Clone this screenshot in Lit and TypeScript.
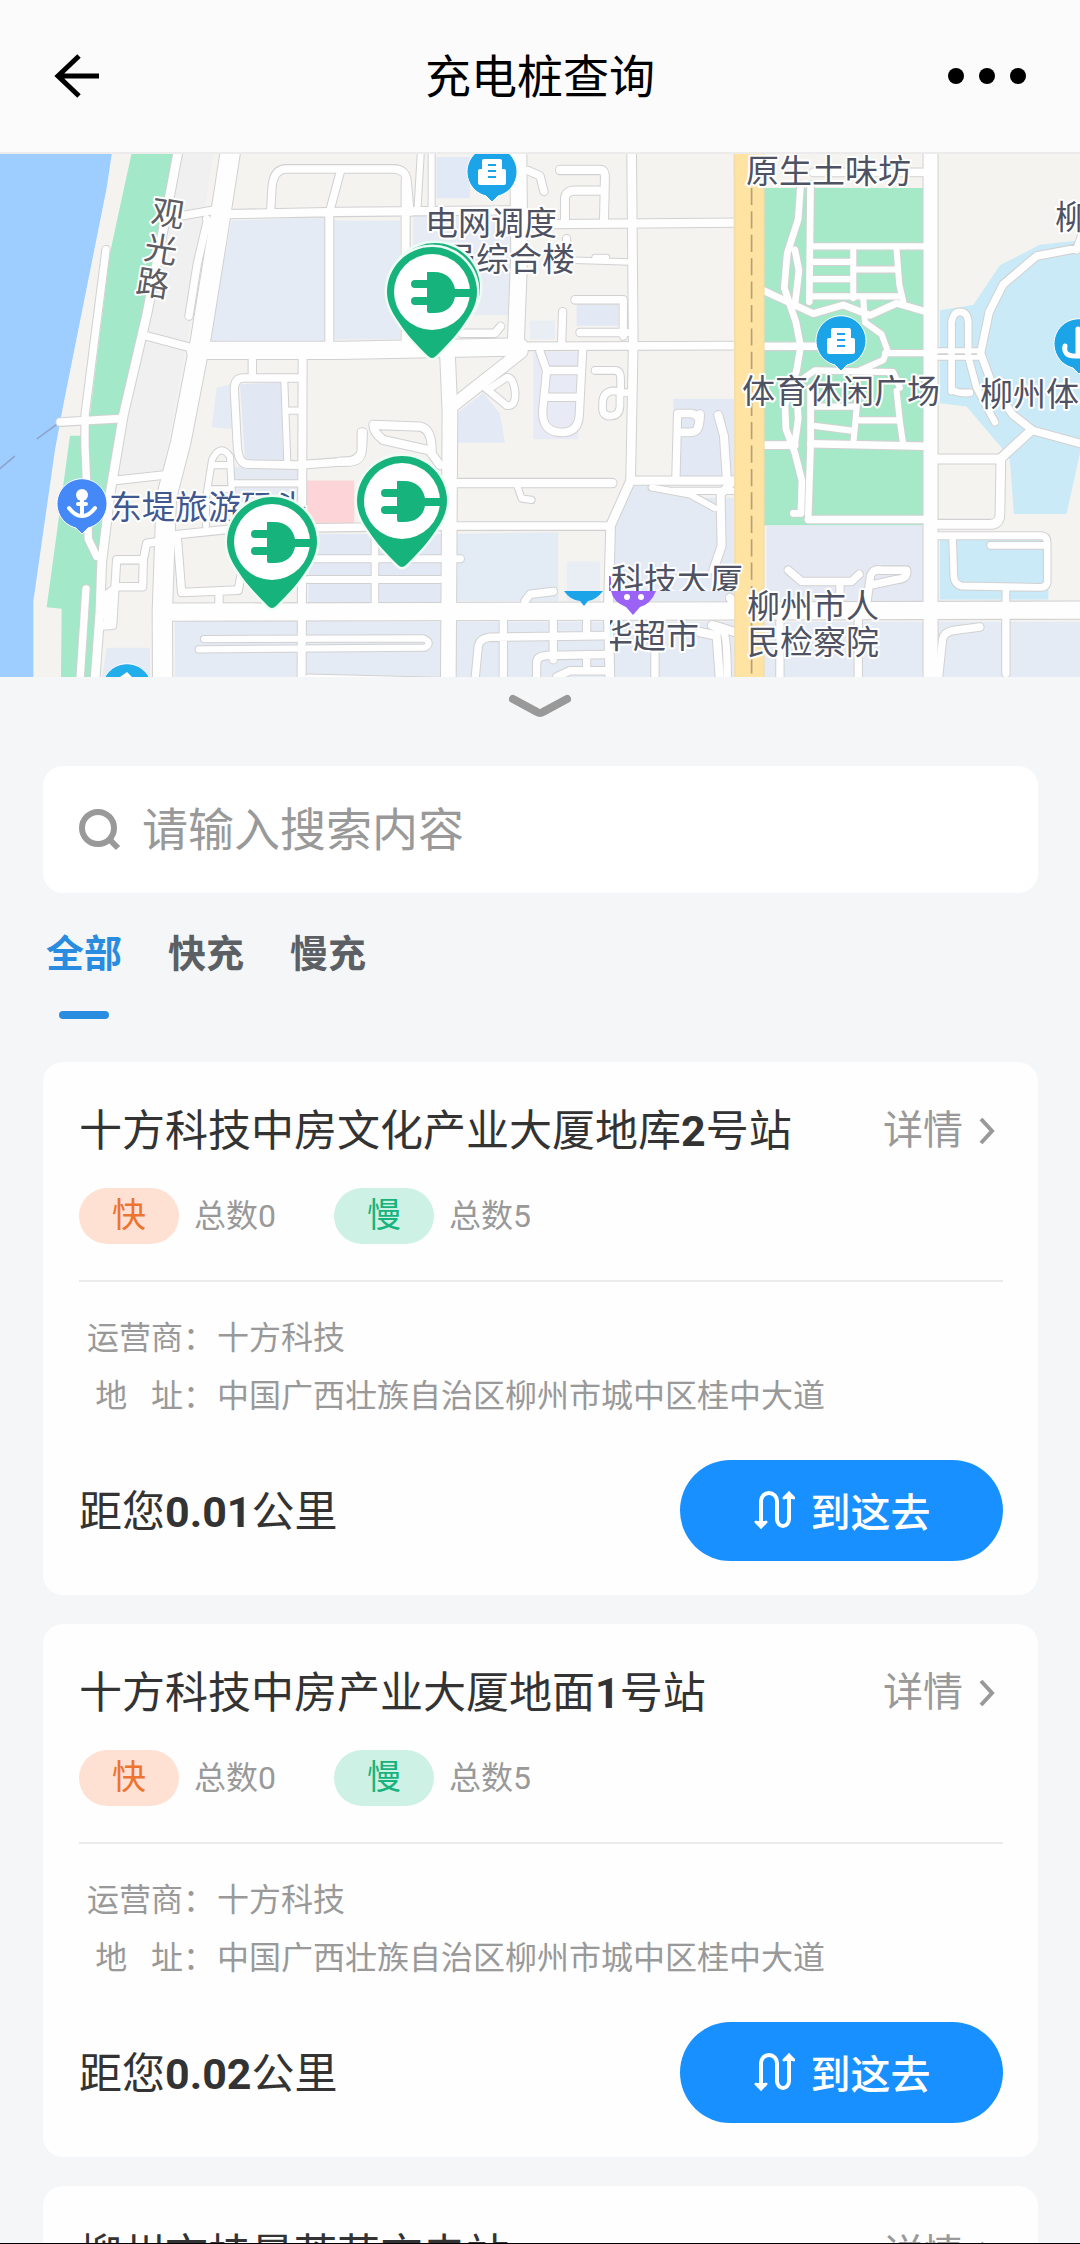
import { LitElement, html, svg, css } from "lit";
import { customElement, property, state } from "lit/decorators.js";
import { classMap } from "lit/directives/class-map.js";

interface Station {
  name: string;
  fast: number;
  slow: number;
  operator: string;
  address: string;
  distance: string;
}

const STATIONS: Station[] = [
  {
    name: "十方科技中房文化产业大厦地库2号站",
    fast: 0,
    slow: 5,
    operator: "十方科技",
    address: "中国广西壮族自治区柳州市城中区桂中大道",
    distance: "0.01",
  },
  {
    name: "十方科技中房产业大厦地面1号站",
    fast: 0,
    slow: 5,
    operator: "十方科技",
    address: "中国广西壮族自治区柳州市城中区桂中大道",
    distance: "0.02",
  },
  {
    name: "柳州市桂景荟苑充电站",
    fast: 0,
    slow: 5,
    operator: "十方科技",
    address: "中国广西壮族自治区柳州市城中区桂中大道",
    distance: "0.03",
  },
];

/** Wraps runs of digits so that they can be set in bold. */
const boldDigits = (text: string) =>
  text
    .split(/([\d.]+)/)
    .map((part) => (/^[\d.]+$/.test(part) ? html`<b class="num">${part}</b>` : part));

// Map areas: [fill, path], in survey units (three to a map pixel).
const AREAS: [string, string][] = [
  ["#9ecdff", "M0 0H337L320 110L190 740L165 870L100 1310V1540H0Z"],
  ["#a3e8c8", "M397 0H522L500 150L370 770L330 960L300 1180L290 1340L270 1540H183L185 1332L140 1328L210 830H262L330 300L352 200Z"],
  ["#f1f0f0", "M530 12H640L600 250L560 570L440 540ZM435 555L555 585L490 930L350 945Z"],
  ["#e5ebf4", "M695 205L975 195L978 555H625Z"],
  ["#e5ebf4", "M1000 205H1200V550H1000Z"],
  ["#e1e8f4", "M720 680L842 675L850 900H735Z"],
  ["#e5ebf4", "M650 690L690 680L700 810L635 805Z"],
  ["#e5eaf2", "M700 920H895V1050H700Z"],
  ["#fdd5d8", "M918 960H1063V1085H918Z"],
  ["#e5ebf4", "M525 1370H3240V1540H525Z"],
  ["#e5ebf4", "M320 1445H450V1540H305Z"],
  ["#e3e9f4", "M925 1115H1325V1320H925Z"],
  ["#e3ebf4", "M1365 1115L1675 1110V1310H1365Z"],
  ["#e9edf4", "M1700 1195H1800V1310H1700Z"],
  ["#e3eaf4", "M1840 1090L1895 975L1965 975L2060 1010L2205 1010V1310H1840Z"],
  ["#e3e9f4", "M2020 722H2205V950H2020Z"],
  ["#e0e9f5", "M1310 20H1410V140H1310Z"],
  ["#e6ebf4", "M1240 190H1540V480H1240Z"],
  ["#e3e9f4", "M1730 450H1855V510H1730Z"],
  ["#e9edf4", "M1590 495H1665V550H1590Z"],
  ["#e8ebf5", "M1600 585H1735V840H1600Z"],
  ["#e4eaf5", "M1370 765L1450 705L1500 765L1515 850H1370Z"],
  ["#a5e9c9", "M2290 110H2770V1090H2290Z"],
  ["#e5e9f3", "M2300 1090H2770V1310H2300Z"],
  ["#c9eaf6", "M2820 465L2920 450L3000 335L3120 275L3240 262V880L3200 1057H3042L3030 900L3010 870L2900 745L2820 735Z"],
  ["#c9eaf6", "M2820 1130H3150L3145 1305H2820Z"],
];

// Streets: [x offset of the sheet, width, path].
const STREETS: [number, number, string][] = [
  [0, 22, "M318 290L255 770L255 860L262 1020L265 1130L290 1180M180 790L360 780M258 1275L240 1540"],
  [0, 26, "M535 0L500 180L440 480L370 770L330 1000L305 1200L300 1340L285 1540"],
  [0, 22, "M440 540L565 572M340 960L500 943M550 190L640 175M620 200L630 235M622 205L592 330L567 482"],
  [0, 22, "M310 1382L338 1380L350 1190L430 1190L428 1268L352 1268M430 1190L440 1142L480 1137M322 1380V1290L350 1268"],
  [0, 22, "M812 180L816 110Q820 55 860 55H1180Q1220 55 1222 95L1230 180M990 175L1022 60"],
  [0, 24, "M680 186L1020 180L1560 175M988 185V570M1217 90V570"],
  [0, 22, "M757 610V660M895 662H730Q703 662 703 695L712 860Q715 912 745 912L890 915L1030 905Q1085 905 1088 860L1090 820"],
  [0, 18, "M853 670L862 905M870 757H900M700 968H905M618 1090V1010L636 900Q660 850 690 890L695 985M640 915H690M636 985H690"],
  [0, 22, "M520 1118L700 1100L1370 1092L1820 1092M532 1125L545 1285L715 1278L722 1240M657 1280V1320"],
  [0, 20, "M925 1187H1382M925 1247H1320M1125 1100V1330"],
  [0, 18, "M612 1420L1270 1418Q1300 1430 1275 1445L596 1450M925 1532L1340 1542"],
  [0, 24, "M908 610L905 1540"],
  [0, 58, "M692 0L652 250L602 550L542 850L499 1010L487 1340L488 1540"],
  [1020, 18, "M243 0L233 165M275 0V165"],
  [1020, 24, "M660 58H780Q795 58 795 80L792 210M675 215V140Q678 120 700 118H790M640 215L1195 211"],
  [1020, 22, "M565 60L600 75L612 120M680 258V270M705 435H850V540M720 530H860M668 470L665 565M365 532L465 532L482 512"],
  [1020, 16, "M705 320L870 325M765 312H800"],
  [1020, 22, "M600 585L620 640L608 760Q608 820 665 820Q715 820 718 770L728 580M620 640H720M620 718H720"],
  [1020, 20, "M765 640H825Q842 640 842 665V700H815Q788 705 788 735V755Q792 775 815 772Q838 770 840 745V705H875"],
  [1020, 20, "M435 690L500 742Q530 745 525 700Q520 660 500 660L450 692"],
  [1020, 24, "M300 915L268 872L130 842Q100 820 100 798L240 803Q278 810 275 880M65 820V870Q65 905 20 905H0"],
  [1020, 24, "M345 967H818M870 960H1205"],
  [1020, 18, "M530 970L545 1012L575 1016M935 980L1050 1000L1125 1040M1000 990H1190"],
  [1020, 22, "M1008 950L1013 765H1055Q1080 770 1078 795Q1075 820 1050 820H1018M555 1310L570 1290L640 1282"],
  [1020, 22, "M490 1350V1540M640 1350V1480M405 1540L415 1440Q420 1418 450 1415L790 1410M740 1350V1410M590 1540V1490Q590 1470 620 1468L800 1465M740 1465V1505M650 1530L690 1512H800"],
  [1020, 22, "M945 1350V1540M1115 1380L1150 1398Q1162 1410 1162 1540"],
  [1020, 26, "M875 0L880 560L872 960L812 1090L805 1340L810 1540"],
  [1020, 22, "M520 570L1190 568"],
  [1020, 36, "M335 745L420 680L545 585"],
  [1020, 48, "M535 0L538 300L527 575"],
  [1020, 44, "M322 580L330 760L325 1540"],
  [0, 50, "M585 582L1020 582L1560 572"],
  [2100, 20, "M302 100L295 200L262 300L253 400L288 500L302 570L290 640L255 740L258 810L285 880L306 960L303 1055H280M285 290L297 350L285 450M290 700L295 780L285 850"],
  [2100, 20, "M332 100L328 440M332 690L332 860L325 1060M190 408L280 448L340 475L430 450L510 480L590 445L680 470"],
  [2100, 18, "M335 280H680M335 325H460M335 375H450M335 425H600M460 285V430M590 290L598 390L610 440M470 347H590"],
  [2100, 18, "M490 430L495 500L545 535L562 580L550 610L480 640M555 590H680M335 745H460M335 800L455 815M475 700L460 855M480 785H590M590 700L600 790L610 855M300 670L345 640L580 645L600 690"],
  [2100, 22, "M190 857H285M332 853L680 860M190 570H380M325 1073H690"],
  [2100, 20, "M755 700V500Q760 470 780 470Q803 470 805 500V590M755 600V690Q760 708 810 705M805 600L830 690L885 790"],
  [2100, 14, "M715 583H840M715 602H840"],
  [2100, 22, "M1145 283L1010 308L910 390L868 470L842 590L880 690L940 770L1000 815L1140 852M1130 290L1145 250"],
  [2100, 26, "M990 818L903 895L900 1060Q898 1087 870 1087H715M903 897H715"],
  [2100, 20, "M715 1120H1025Q1042 1122 1042 1140V1255Q1040 1270 1020 1270L785 1266Q765 1262 762 1240L758 1130M1040 1148H872M918 1270V1330"],
  [2100, 22, "M918 1340V1520M715 1540L728 1420Q732 1400 760 1395L840 1385M475 1350V1540M240 1370V1540"],
  [2100, 22, "M265 1220L305 1253H455L478 1232M420 1255V1320M500 1320L512 1235Q520 1215 545 1220H620Q625 1245 590 1247L520 1262"],
  [2100, 24, "M55 770L72 830L80 945M100 960L62 1000L65 1150L40 1220M108 1330L90 1300M0 1400L50 1410L60 1540M40 1380L105 1400M0 768Q0 790 -5 800"],
  [2100, 22, "M340 65H680"],
  [2100, 42, "M692 0V1540"],
  [0, 50, "M500 1342L3240 1336"],
];

// Point-of-interest names: [x, baseline, text].
const PLACES: [number, number, string][] = [
  [425, 81, "电网调度"],
  [443, 117, "局综合楼"],
  [746, 29, "原生土味坊"],
  [742, 249, "体育休闲广场"],
  [980, 252, "柳州体"],
  [1055, 75, "柳州"],
  [747, 464, "柳州市人"],
  [747, 500, "民检察院"],
];

const CHARGERS: [number, number][] = [
  [435, 134],
  [432, 138],
  [402, 347],
  [272, 388],
];

@customElement("station-map")
class StationMap extends LitElement {
  static styles = css`
    :host {
      display: block;
      background: #f4f3f0;
    }
    .map {
      display: block;
      width: 100%;
      height: auto;
    }
    .line {
      fill: none;
      stroke-linecap: round;
      stroke-linejoin: round;
    }
    .casing {
      stroke: #d2d1d2;
    }
    .paving {
      stroke: #fefefe;
    }
    .place {
      font: 400 33px "Noto Sans CJK SC", sans-serif;
      fill: #4e5262;
      stroke: #fff;
      stroke-width: 4px;
      stroke-linejoin: round;
      paint-order: stroke;
    }
    .pier {
      fill: #40588f;
    }
    .street {
      fill: #5c5c62;
      text-anchor: middle;
    }
  `;

  private street([dx, width, d]: [number, number, string], kind: string) {
    const extra = kind === "casing" ? 6 : 0;
    return svg`<path class="line ${kind}" d=${d} stroke-width=${width + extra} transform="translate(${dx} 0)" />`;
  }

  private poi(x: number, y: number, fill: string, glyph: unknown) {
    return svg`<g transform="translate(${x} ${y})">
      <path d="M0 30L-6 24A25 25 0 1 1 6 24Z" fill=${fill} stroke="#fff" stroke-width="1" />
      ${glyph}
    </g>`;
  }

  private building() {
    return svg`<path d="M-8-13H8Q10-13 10-11V-3H12Q14-3 14-1V11Q14 13 12 13H-12Q-14 13-14 11V-1Q-14-3-12-3H-10V-11Q-10-13-8-13Z" fill="#fff" />
      <path d="M-4-7H4M-4-1H4M-4 5H4" stroke="#1ba5e8" stroke-width="2" />`;
  }

  private charger([x, y]: [number, number]) {
    return svg`<g transform="translate(${x} ${y})">
      <path d="M-4 64C-14 54-26 42-34 29C-41 19-45 10-45 0A45 45 0 0 1 45 0C45 10 41 19 34 29C26 42 14 54 4 64Q0 68-4 64Z"
        fill="#17b37c" stroke="#eefcf6" stroke-width="5" paint-order="stroke" />
      <circle r="38" fill="#fff" />
      <path d="M-5-20H2C14-20 21-13 23-3H40V5H23C21 15 14 21 2 21H-3Q-5 21-5 19V13H-17A4 4 0 0 1-17 5H-5V-4H-17A4 4 0 0 1-17-12H-5Z" fill="#17b37c" />
    </g>`;
  }

  render() {
    return html`
      <svg class="map" viewBox="0 0 1080 523" role="img" aria-label="充电桩地图">
        <defs>
          <clipPath id="tower"><rect x="608" y="400" width="140" height="37" /></clipPath>
          <clipPath id="market"><rect x="610" y="437" width="120" height="86" /></clipPath>
        </defs>
        <rect width="1080" height="523" fill="#f4f3f0" />
        <g transform="translate(0 -4) scale(.3333 .3444)">
          ${AREAS.map(([fill, d]) => svg`<path d=${d} fill=${fill} />`)}
          <path class="line" d="M0 925L43 890M112 838L180 790" stroke="#8fa6cc" stroke-width="5" />
          ${STREETS.map((s) => this.street(s, "casing"))}
          ${STREETS.map((s) => this.street(s, "paving"))}
          <path d="M2200 0H2292V1540H2205Z" fill="#ffe3a2" />
          <path d="M2205 0V1540M2292 0V1540" stroke="#f0dcae" stroke-width="4" />
          <path d="M2255 110V1540" stroke="#b3a07c" stroke-width="5" stroke-dasharray="50 18" />
        </g>
        ${this.poi(492, 18, "#1ba5e8", this.building())}
        ${this.poi(841, 187, "#1ba5e8", this.building())}
        ${this.poi(
          1079,
          190,
          "#1ba5e8",
          svg`<path class="line" d="M-1-15V8M-14 2Q-16 12-4 12H10" stroke="#fff" stroke-width="5" />`,
        )}
        ${this.poi(
          82,
          350,
          "#4489f7",
          svg`<circle cy="-9" r="6" fill="#fff" />
            <path class="line" d="M0-6V11M-4 0H4M-13 4Q-7 12 0 12Q7 12 13 4" stroke="#fff" stroke-width="4" />`,
        )}
        ${this.poi(127, 535, "#22aeea", svg`<path d="M-7-12L0-17L5-12Z" fill="#fff" />`)}
        <path d="M564 437H603Q596 446 588 447L584 452L580 447Q570 446 564 437Z" fill="#1ba5e8" />
        <path d="M611 437H656Q651 450 640 453L633 461L626 453Q613 448 611 437Z" fill="#9a63f5" />
        <path d="M609 422H611V437H609Z" fill="#9a63f5" />
        <circle cx="627" cy="443" r="3" fill="#fff" />
        <circle cx="641" cy="443" r="3" fill="#fff" />
        ${PLACES.map(([x, y, name]) => svg`<text class="place" x=${x} y=${y}>${name}</text>`)}
        <g clip-path="url(#tower)"><text class="place" x="611" y="438">科技大厦</text></g>
        <g clip-path="url(#market)"><text class="place" x="600" y="494">华超市</text></g>
        <text class="place pier" x="109" y="365">东堤旅游码头</text>
        <text class="place street" transform="translate(166 71) rotate(9)">观</text>
        <text class="place street" transform="translate(159 107) rotate(9)">光</text>
        <text class="place street" transform="translate(151 141) rotate(9)">路</text>
        ${CHARGERS.map((c) => this.charger(c))}
      </svg>
    `;
  }
}

@customElement("station-card")
class StationCard extends LitElement {
  @property({ attribute: false }) station!: Station;

  static styles = css`
    :host {
      display: block;
      flex: none;
      padding: 39px 35px 34px 36px;
      border-radius: 20px;
      background: #fefefe;
      color: #333;
    }
    .head,
    .foot {
      display: flex;
      align-items: center;
      justify-content: space-between;
    }
    .name {
      margin: 0;
      font-size: 43px;
      font-weight: 400;
      line-height: 60px;
      white-space: nowrap;
    }
    .num {
      font-family: Roboto, sans-serif;
      font-weight: 700;
    }
    .more {
      display: flex;
      align-items: center;
      gap: 16px;
      padding-right: 8px;
      color: #999;
      font-size: 40px;
      line-height: 60px;
      text-decoration: none;
    }
    .counts {
      display: flex;
      gap: 58px;
      margin-top: 27px;
      padding-bottom: 36px;
      border-bottom: 2px solid #ebebeb;
    }
    .count {
      display: flex;
      align-items: center;
      gap: 15px;
      color: #999;
      font-size: 32px;
      line-height: 58px;
      height: 56px;
    }
    .badge {
      width: 100px;
      border-radius: 28px;
      font-size: 34px;
      line-height: 54px;
      height: 56px;
      text-align: center;
    }
    .fast {
      background: #ffe1d3;
      color: #ec7430;
    }
    .slow {
      background: #cdf1e4;
      color: #17b37c;
    }
    .info {
      display: grid;
      grid-template-columns: 138px 1fr;
      margin: 27px 0 35px;
      color: #999;
      font-size: 32px;
      line-height: 58px;
    }
    .label {
      padding-right: 2px;
      text-align: right;
    }
    .value {
      margin: 0;
    }
    .away {
      padding-top: 3px;
      font-size: 43px;
      line-height: 60px;
    }
    .go {
      display: flex;
      align-items: center;
      justify-content: center;
      gap: 16px;
      width: 323px;
      height: 101px;
      padding: 0 0 2px;
      border: 0;
      border-radius: 51px;
      background: #1890ff;
      color: #fff;
      font: inherit;
      font-size: 40px;
      font-weight: 500;
    }
  `;

  render() {
    const s = this.station;
    return html`
      <div class="head">
        <h2 class="name">${boldDigits(s.name)}</h2>
        <a class="more" href="#detail"
          >详情
          <svg width="16" height="28" viewBox="0 0 16 28" fill="none" stroke="#999" stroke-width="4" aria-hidden="true">
            <path d="M2 2L13 14L2 26" />
          </svg>
        </a>
      </div>
      <div class="counts">
        <div class="count"><span class="badge fast">快</span><span>总数${s.fast}</span></div>
        <div class="count"><span class="badge slow">慢</span><span>总数${s.slow}</span></div>
      </div>
      <dl class="info">
        <dt class="label">运营商：</dt>
        <dd class="value">${s.operator}</dd>
        <dt class="label">地&nbsp;&nbsp;&nbsp;址：</dt>
        <dd class="value">${s.address}</dd>
      </dl>
      <div class="foot">
        <span class="away">距您${boldDigits(s.distance)}公里</span>
        <button class="go" type="button">
          <svg width="42" height="40" viewBox="0 0 42 40" fill="none" stroke="#fff" stroke-width="4" aria-hidden="true">
            <path d="M8 33V11A8 8 0 0 1 24 11V29A6 7 0 0 0 36 29V7" />
            <path d="M2 31H14L8 39ZM30 9H42L36 1Z" fill="#fff" stroke="none" />
            <path d="M3 32L8 37L13 32M31 8L36 3L41 8" stroke-width="3" stroke-linecap="round" />
          </svg>
          到这去
        </button>
      </div>
    `;
  }
}

@customElement("app-root")
class AppRoot extends LitElement {
  @state() private tab = "全部";

  static styles = css`
    :host {
      display: flex;
      flex-direction: column;
      box-sizing: border-box;
      height: 100vh;
      overflow: hidden;
      border-bottom: 1px solid #000;
      background: #f4f6f8;
      font-family: Roboto, "Noto Sans CJK SC", sans-serif;
    }
    .bar {
      display: grid;
      grid-template-columns: 1fr auto 1fr;
      align-items: center;
      flex: none;
      box-sizing: border-box;
      height: 154px;
      padding: 0 54px;
      border-bottom: 2px solid #ececec;
      background: #fbfbfb;
    }
    .title {
      margin: 0;
      padding-top: 2px;
      color: #000;
      font-size: 46px;
      font-weight: 400;
      line-height: 60px;
    }
    .icon {
      display: flex;
      padding: 0;
      border: 0;
      background: none;
    }
    .dots {
      justify-self: end;
    }
    .map {
      flex: none;
    }
    .fold {
      display: flex;
      align-items: center;
      justify-content: center;
      flex: none;
      height: 57px;
      padding: 0;
      border: 0;
      background: none;
    }
    .search {
      display: flex;
      align-items: center;
      gap: 21px;
      flex: none;
      height: 127px;
      margin: 32px 42px 0 43px;
      padding: 0 36px;
      border-radius: 20px;
      background: #fff;
    }
    .field {
      flex: 1;
      min-width: 0;
      height: 80px;
      padding: 0;
      border: 0;
      outline: 0;
      background: none;
      color: #333;
      font: inherit;
      font-size: 46px;
    }
    .field::placeholder {
      color: #999;
      opacity: 1;
    }
    .tabs {
      display: flex;
      gap: 46px;
      flex: none;
      padding: 31px 46px 0;
    }
    .tab {
      display: flex;
      flex-direction: column;
      align-items: center;
      gap: 27px;
      padding: 0;
      border: 0;
      background: none;
      color: #5c5f63;
      font: inherit;
      font-size: 38px;
      font-weight: 700;
      line-height: 60px;
    }
    .tab::after {
      content: "";
      width: 50px;
      height: 8px;
      border-radius: 4px;
    }
    .on {
      color: #2a8ce0;
    }
    .on::after {
      background: #2a8ce0;
    }
    .list {
      display: flex;
      flex-direction: column;
      flex: 1;
      gap: 29px;
      min-height: 0;
      margin-top: 43px;
      padding: 0 42px 0 43px;
      overflow-y: auto;
      scrollbar-width: none;
    }
  `;

  render() {
    return html`
      <header class="bar">
        <button class="icon" type="button" aria-label="返回">
          <svg width="46" height="44" viewBox="0 0 46 44" fill="none" stroke="#000" stroke-width="5">
            <path d="M45 22H4M25 2L4 22L25 42" />
          </svg>
        </button>
        <h1 class="title">充电桩查询</h1>
        <button class="icon dots" type="button" aria-label="更多">
          <svg width="78" height="16" viewBox="0 0 78 16">
            <circle cx="8" cy="8" r="8" />
            <circle cx="39" cy="8" r="8" />
            <circle cx="70" cy="8" r="8" />
          </svg>
        </button>
      </header>
      <station-map class="map"></station-map>
      <button class="fold" type="button" aria-label="收起地图">
        <svg width="62" height="24" viewBox="0 0 62 24" fill="none" stroke="#999" stroke-width="8" stroke-linecap="round">
          <path d="M4 5L28 18Q31 20 34 18L58 5" />
        </svg>
      </button>
      <label class="search">
        <svg width="42" height="42" viewBox="0 0 42 42" fill="none" stroke="#999" stroke-width="6" aria-hidden="true">
          <circle cx="19" cy="19" r="16" />
          <path d="M30 30L39 39" />
        </svg>
        <input class="field" type="text" aria-label="搜索" placeholder="请输入搜索内容" />
      </label>
      <nav class="tabs" role="tablist">
        ${["全部", "快充", "慢充"].map(
          (name) => html`<button
            class=${classMap({ tab: true, on: this.tab === name })}
            type="button"
            role="tab"
            aria-selected=${this.tab === name}
            @click=${() => (this.tab = name)}
          >
            ${name}
          </button>`,
        )}
      </nav>
      <main class="list">
        ${STATIONS.map((s) => html`<station-card .station=${s}></station-card>`)}
      </main>
    `;
  }
}
